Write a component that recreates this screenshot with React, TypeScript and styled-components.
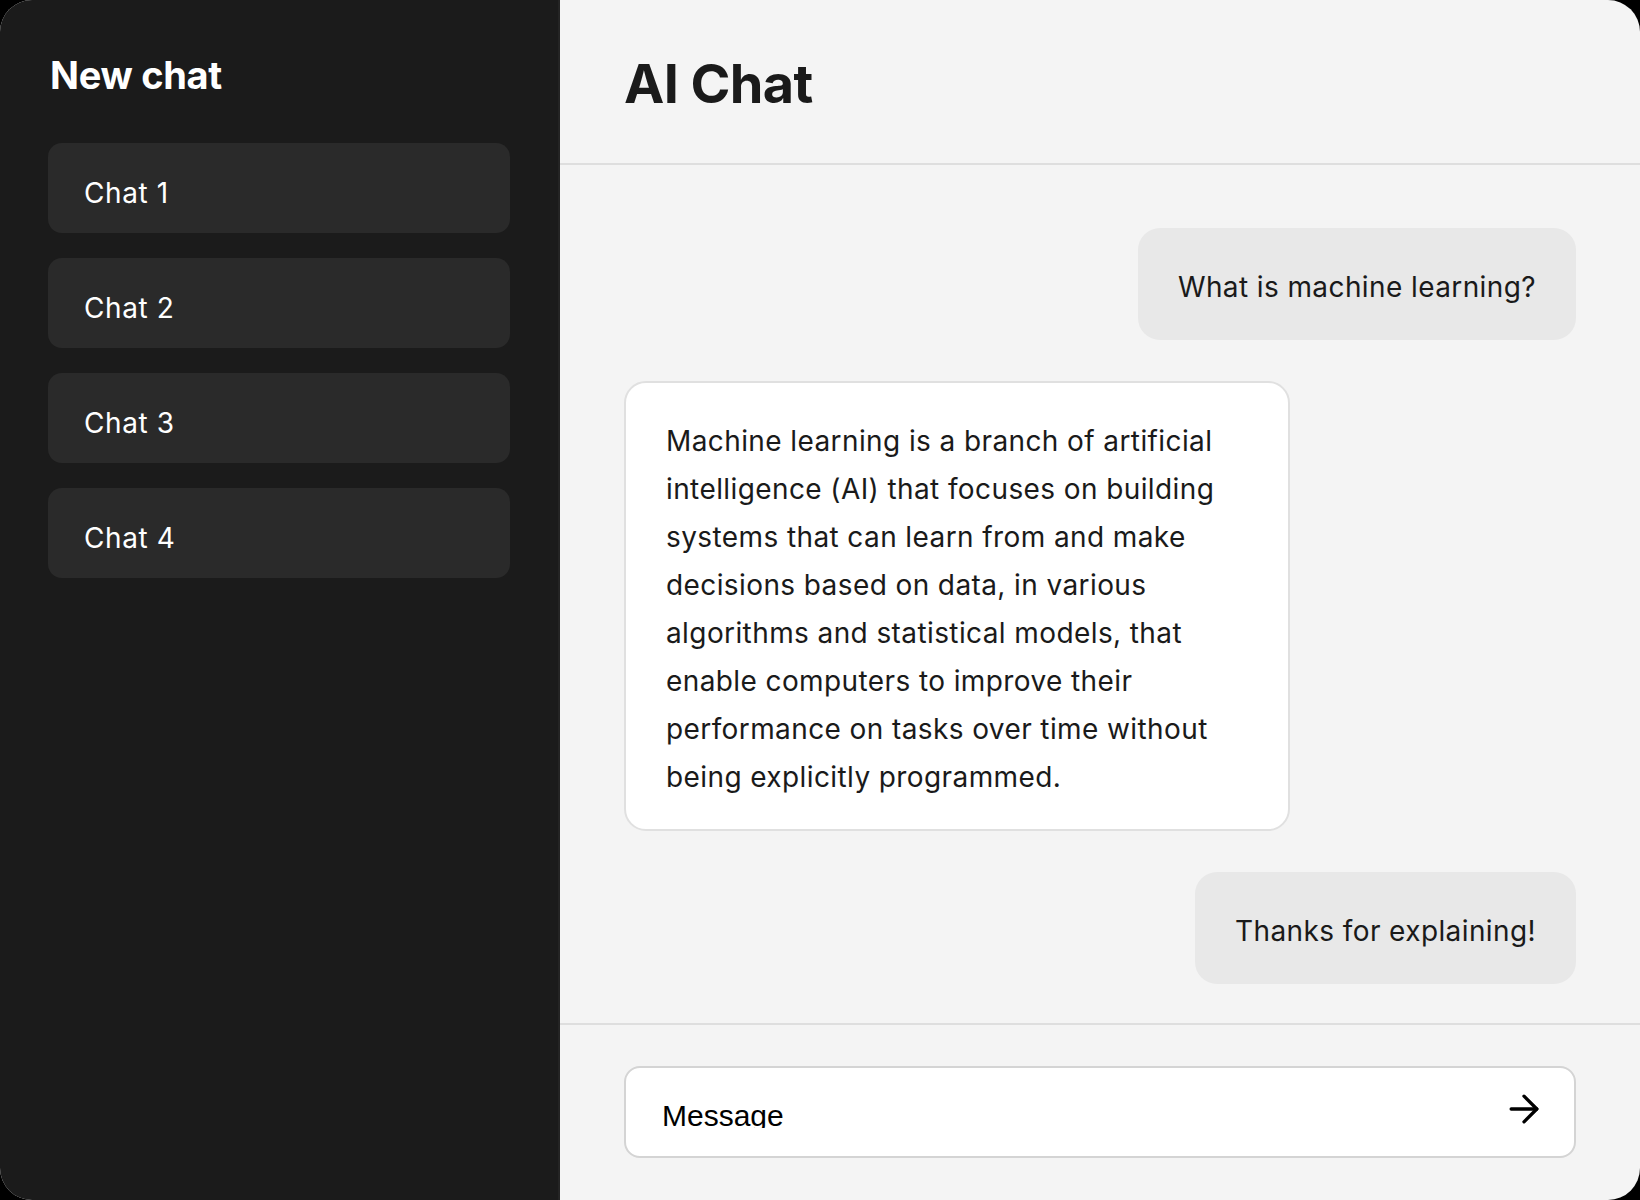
import styled, { createGlobalStyle } from 'styled-components';
import { ArrowRight } from 'lucide-react';

const GlobalStyle = createGlobalStyle`
  * {
    box-sizing: border-box;
  }
  html, body {
    margin: 0;
    padding: 0;
    background: #000;
  }
  body {
    font-family: Inter, 'Noto Sans', sans-serif;
  }
`;

type Message = {
  id: number;
  from: 'user' | 'ai';
  text: string;
};

const chats = ['Chat 1', 'Chat 2', 'Chat 3', 'Chat 4'];

const messages: Message[] = [
  { id: 1, from: 'user', text: 'What is machine learning?' },
  {
    id: 2,
    from: 'ai',
    text: 'Machine learning is a branch of artificial intelligence (AI) that focuses on building systems that can learn from and make decisions based on data, in various algorithms and statistical models, that enable computers to improve their performance on tasks over time without being explicitly programmed.'
  },
  { id: 3, from: 'user', text: 'Thanks for explaining!' }
];

function App() {
  return (
    <>
      <GlobalStyle />
      <Shell>
        <Sidebar>
          <SidebarTitle>New chat</SidebarTitle>
          <ChatList>
            {chats.map((chat) => (
              <ChatItem key={chat}>{chat}</ChatItem>
            ))}
          </ChatList>
        </Sidebar>

        <Main>
          <Header>
            <Title>AI Chat</Title>
          </Header>

          <Messages>
            {messages.map((m) => (
              <Bubble key={m.id} $from={m.from}>
                {m.text}
              </Bubble>
            ))}
          </Messages>

          <Footer>
            <InputBox>
              <InputClip>
                <Input placeholder="Message" />
              </InputClip>
              <SendButton type="button" aria-label="Send">
                <ArrowRight size={44} strokeWidth={1.8} />
              </SendButton>
            </InputBox>
          </Footer>
        </Main>
      </Shell>
    </>
  );
}

const Shell = styled.div`
  display: flex;
  height: 100vh;
  border-radius: 32px;
  overflow: hidden;
  background: #f4f4f4;
`;

const Sidebar = styled.aside`
  width: 560px;
  flex-shrink: 0;
  background: #1b1b1b;
  border-right: 2px solid #242424;
  padding: 48px 48px;
  display: flex;
  flex-direction: column;
`;

const SidebarTitle = styled.h2`
  margin: 3px 0 0 2px;
  color: #fff;
  font-size: 38px;
  font-weight: 700;
  line-height: 48px;
  letter-spacing: -0.3px;
`;

const ChatList = styled.div`
  display: flex;
  flex-direction: column;
  gap: 25px;
  margin-top: 44px;
  width: 462px;
`;

const ChatItem = styled.div`
  background: #2a2a2a;
  color: #fff;
  border-radius: 14px;
  height: 90px;
  padding: 9px 36px 0;
  display: flex;
  align-items: center;
  font-size: 28px;
  line-height: 34px;
  letter-spacing: 0.6px;
`;

const Main = styled.main`
  flex: 1;
  display: flex;
  flex-direction: column;
  min-width: 0;
`;

const Header = styled.header`
  height: 165px;
  flex-shrink: 0;
  border-bottom: 2px solid #dedede;
  padding: 0 64px;
  display: flex;
  align-items: center;
`;

const Title = styled.h1`
  margin: 3px 0 0;
  font-size: 54px;
  font-weight: 700;
  color: #1a1a1a;
  letter-spacing: -0.6px;
`;

const Messages = styled.div`
  flex: 1;
  overflow: hidden;
  padding: 63px 64px 0;
  display: flex;
  flex-direction: column;
  gap: 41px;
`;

const Bubble = styled.div<{ $from: 'user' | 'ai' }>`
  max-width: 70%;
  align-self: ${(p) => (p.$from === 'user' ? 'flex-end' : 'flex-start')};
  background: ${(p) => (p.$from === 'user' ? '#e8e8e8' : '#fff')};
  border: ${(p) => (p.$from === 'user' ? 'none' : '2px solid #e0e0e0')};
  border-radius: 22px;
  padding: ${(p) => (p.$from === 'user' ? '35px 40px 29px' : '34px 40px 28px')};
  font-size: 28px;
  line-height: 48px;
  letter-spacing: 0.4px;
  color: #1a1a1a;
`;

const Footer = styled.footer`
  flex-shrink: 0;
  border-top: 2px solid #dedede;
  padding: 41px 64px 42px;
`;

const InputBox = styled.div`
  height: 92px;
  background: #fff;
  border: 2px solid #d4d4d4;
  border-radius: 16px;
  display: flex;
  align-items: center;
  padding: 0 28px 0 36px;
`;

const InputClip = styled.div`
  flex: 1;
  align-self: flex-start;
  height: 32px;
  margin-top: 28px;
  overflow: hidden;
`;

const Input = styled.input`
  display: block;
  width: 100%;
  height: 40px;
  border: none;
  outline: none;
  background: transparent;
  padding: 0;
  font-family: 'Liberation Sans', Arial, sans-serif;
  font-size: 30px;
  color: #000;
  &::placeholder {
    color: #000;
  }
`;

const SendButton = styled.button`
  border: none;
  background: none;
  padding: 0;
  margin-top: -6px;
  display: flex;
  color: #000;
  cursor: pointer;
`;

export default App;
